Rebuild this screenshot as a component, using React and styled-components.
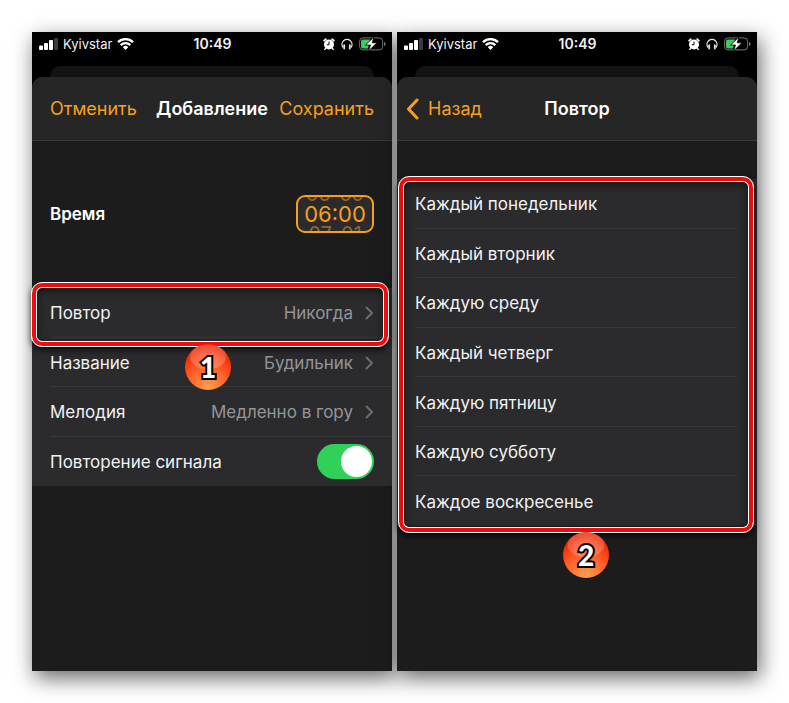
import React, { useState } from "react";
import styled, { createGlobalStyle, css, ThemeProvider } from "styled-components";

const theme = {
  color: {
    orange: "#f7a01d",
    sheet: "#1c1c1d",
    header: "#262627",
    row: "#2b2b2d",
    line: "#39393b",
    gray: "#949499",
    green: "#30d158",
  },
};

const DAYS = [
  "Каждый понедельник",
  "Каждый вторник",
  "Каждую среду",
  "Каждый четверг",
  "Каждую пятницу",
  "Каждую субботу",
  "Каждое воскресенье",
];

const OPTIONS = [
  { label: "Повтор", value: "Никогда" },
  { label: "Название", value: "Будильник" },
  { label: "Мелодия", value: "Медленно в гору" },
];

const SignalIcon = () => (
  <svg width="19" height="12" viewBox="0 0 19 12" fill="#fff">
    <rect x="0" y="7.500" width="4" height="4.500" rx="1" />
    <rect x="5" y="5" width="4" height="7" rx="1" />
    <rect x="10" y="2" width="4" height="10" rx="1" />
    <rect x="15" y="0" width="4" height="12" rx="1" fill="#3b3b3b" />
  </svg>
);

const WifiIcon = () => (
  <svg width="17" height="12" viewBox="0 0 17 12" fill="none" stroke="#fff">
    <path d="M1 4.2a10.6 10.6 0 0 1 15 0" strokeWidth="2.4" />
    <path d="M3.7 7.100a6.8 6.8 0 0 1 9.6 0" strokeWidth="2.2" />
    <path d="M8.5 12 5.8 9.2a3.8 3.8 0 0 1 5.4 0z" fill="#fff" stroke="none" />
  </svg>
);

const AlarmIcon = () => (
  <svg width="12" height="12" viewBox="0 0 12 12">
    <circle cx="6" cy="6.500" r="5" fill="#fff" />
    <path
      d="M1.200 2.700 2.800 1.200M10.800 2.700 9.200 1.200"
      stroke="#fff"
      strokeWidth="1.8"
      strokeLinecap="round"
    />
    <path d="M2.600 10.500l-.8.900M9.400 10.500l.8.900" stroke="#fff" strokeWidth="1.4" strokeLinecap="round" />
    <path d="M6 3.600v3.200H3.900" fill="none" stroke="#000" strokeWidth="1" />
  </svg>
);

const HeadphonesIcon = () => (
  <svg width="12" height="12" viewBox="0 0 12 12" fill="none" stroke="#e6e6e6">
    <path d="M2 9.500A5 5 0 1 1 10 9.500" strokeWidth="1.3" />
    <path d="M3.200 7.200v3.300M8.800 7.200v3.300" strokeWidth="1.8" strokeLinecap="round" />
  </svg>
);

const BatteryIcon = () => (
  <svg width="27" height="14" viewBox="0 0 27 14">
    <rect x=".6" y=".9" width="23" height="12" rx="3.4" fill="none" stroke="#777" strokeWidth="1" />
    <path d="M25 5v4c1.2-.4 1.6-1.2 1.6-2S26.200 5.400 25 5z" fill="#777" />
    <path d="M4 2.400h7L9 11.400H4a2 2 0 0 1-2-2v-5a2 2 0 0 1 2-2z" fill="#3ccb62" />
    <path d="M15 0 6.500 8h5L9.500 14 18 5.800h-4.800z" fill="#fff" stroke="#000" strokeWidth=".8" />
  </svg>
);

const Chevron = () => (
  <svg width="10" height="14" viewBox="0 0 10 14" fill="none" stroke="#6d6d71" strokeWidth="2">
    <path d="m2.500 1.500 5.500 5.500-5.500 5.500" strokeLinecap="round" strokeLinejoin="round" />
  </svg>
);

const BackChevron = () => (
  <svg width="13" height="22" viewBox="0 0 13 22" fill="none" stroke="currentColor" strokeWidth="3">
    <path d="M11 2 2.500 11 11 20" strokeLinecap="round" strokeLinejoin="round" />
  </svg>
);

const StatusBar = () => (
  <StatusBarWrapper>
    <StatusGroup>
      <SignalIcon />
      <span>Kyivstar</span>
      <WifiIcon />
    </StatusGroup>
    <Clock>10:49</Clock>
    <StatusGroup $end>
      <AlarmIcon />
      <HeadphonesIcon />
      <BatteryIcon />
    </StatusGroup>
  </StatusBarWrapper>
);

const Phone = ({ header, children }) => (
  <PhoneWrapper>
    <StatusBar />
    <BackSheet />
    <Sheet>
      {header}
      {children}
    </Sheet>
  </PhoneWrapper>
);

const App = () => {
  const [snooze, setSnooze] = useState(true);

  return (
    <ThemeProvider theme={theme}>
      <GlobalStyle />
      <Page>
        <Phone
          header={
            <Header>
              <HeaderButton type="button">Отменить</HeaderButton>
              <Title>Добавление</Title>
              <HeaderButton type="button" $end>
                Сохранить
              </HeaderButton>
            </Header>
          }
        >
          <TimeSection>
            <TimeLabel id="time-label">Время</TimeLabel>
            <TimePicker type="button" aria-labelledby="time-label">
              <TimeLine $faded>
                <span>05</span>
                <span>59</span>
              </TimeLine>
              <TimeLine>06:00</TimeLine>
              <TimeLine $faded>
                <span>07</span>
                <span>01</span>
              </TimeLine>
            </TimePicker>
          </TimeSection>
          <OptionList>
            {OPTIONS.map(({ label, value }) => (
              <OptionRow key={label} as="button" type="button">
                <span>{label}</span>
                <RowValue>
                  {value}
                  <Chevron />
                </RowValue>
              </OptionRow>
            ))}
            <OptionRow $last>
              <label htmlFor="snooze">Повторение сигнала</label>
              <Toggle
                id="snooze"
                type="checkbox"
                checked={snooze}
                onChange={() => setSnooze(!snooze)}
              />
            </OptionRow>
            <RowFrame />
            <StepOne>1</StepOne>
          </OptionList>
        </Phone>

        <Phone
          header={
            <Header>
              <HeaderButton type="button" $back>
                <BackChevron />
                Назад
              </HeaderButton>
              <Title>Повтор</Title>
            </Header>
          }
        >
          <DayList>
            {DAYS.map((day) => (
              <DayRow key={day} type="button">
                {day}
              </DayRow>
            ))}
            <ListFrame />
            <StepTwo>2</StepTwo>
          </DayList>
        </Phone>
      </Page>
    </ThemeProvider>
  );
};

const GlobalStyle = createGlobalStyle`
  * {
    box-sizing: border-box;
  }
  body {
    margin: 0;
    background: #fff;
    font-family: Inter, "Liberation Sans", sans-serif;
  }
  button {
    padding: 0;
    border: 0;
    background: none;
    color: inherit;
    font: inherit;
    text-align: left;
  }
  svg {
    flex: none;
  }
`;

const Page = styled.main`
  display: grid;
  grid-template-columns: 1fr 1fr;
  gap: 5px;
  min-height: 100vh;
  padding: 32px;
`;

const PhoneWrapper = styled.section`
  display: flex;
  flex-direction: column;
  min-width: 0;
  background: #000;
  color: #f2f2f4;
  font-size: 18px;
  box-shadow: 3px 7px 20px rgba(0, 0, 0, 0.6);
`;

const StatusBarWrapper = styled.div`
  display: grid;
  grid-template-columns: 1fr auto 1fr;
  align-items: center;
  height: 23px;
  padding: 0 6px 0 7px;
  font-size: 13px;
`;

const StatusGroup = styled.div`
  display: flex;
  align-items: center;
  gap: 5px;
  ${({ $end }) =>
    $end &&
    css`
      justify-content: flex-end;
      gap: 6px;
    `};
`;

const Clock = styled.span`
  font-size: 14px;
  font-weight: 600;
`;

const BackSheet = styled.div`
  height: 11px;
  margin: 11px 18px 0;
  border-radius: 10px 10px 0 0;
  background: #131313;
`;

const Sheet = styled.div`
  flex: 1;
  border-radius: 11px 11px 0 0;
  background: ${({ theme }) => theme.color.sheet};
`;

const Header = styled.header`
  display: grid;
  grid-template-columns: 1fr auto 1fr;
  align-items: center;
  height: 64px;
  padding: 0 18px;
  border-bottom: 1px solid ${({ theme }) => theme.color.line};
  border-radius: 11px 11px 0 0;
  background: ${({ theme }) => theme.color.header};
`;

const HeaderButton = styled.button`
  && {
    color: ${({ theme }) => theme.color.orange};
    ${({ $end }) =>
      $end &&
      css`
        text-align: right;
      `};
    ${({ $back }) =>
      $back &&
      css`
        display: flex;
        align-items: center;
        gap: 9px;
        margin-left: -9px;
      `};
  }
`;

const Title = styled.h1`
  margin: 0;
  color: #fff;
  font-size: 18px;
  font-weight: 600;
`;

const TimeSection = styled.div`
  display: flex;
  align-items: center;
  justify-content: space-between;
  height: 147px;
  padding: 0 18px 2px;
`;

const TimeLabel = styled.span`
  color: #fff;
  font-size: 17px;
  font-weight: 600;
`;

const TimePicker = styled.button`
  && {
    display: flex;
    flex-direction: column;
    align-items: center;
    justify-content: center;
    width: 78px;
    height: 38px;
    overflow: hidden;
    border: 2px solid ${({ theme }) => theme.color.orange};
    border-radius: 9px;
    background: ${({ theme }) => theme.color.row};
    color: ${({ theme }) => theme.color.orange};
    font-size: 22px;
    line-height: 20px;
  }
`;

const TimeLine = styled.span`
  display: flex;
  ${({ $faded }) =>
    $faded &&
    css`
      gap: 9px;
      font-size: 20px;
      opacity: 0.5;
    `};
`;

const List = styled.div`
  position: relative;
  display: grid;
  grid-auto-rows: 1fr;
  background: ${({ theme }) => theme.color.row};
  font-size: 17px;
`;

const OptionList = styled(List)`
  height: 198px;
`;

const DayList = styled(List)`
  height: 347px;
  margin-top: 38px;
`;

const OptionRow = styled.div`
  && {
    display: flex;
    align-items: center;
    justify-content: space-between;
    margin-left: 18px;
    padding: 2px 18px 0 0;
    border-bottom: 1px solid ${({ theme, $last }) => ($last ? "transparent" : theme.color.line)};
  }
`;

const RowValue = styled.span`
  display: flex;
  align-items: center;
  gap: 11px;
  color: ${({ theme }) => theme.color.gray};
`;

const Toggle = styled.input`
  display: flex;
  align-items: center;
  width: 57px;
  height: 35px;
  margin: 0;
  padding: 2px;
  appearance: none;
  border-radius: 18px;
  background: #39393d;

  &::before {
    content: "";
    width: 31px;
    height: 31px;
    border-radius: 50%;
    background: #fff;
  }
  &:checked {
    justify-content: flex-end;
    background: ${({ theme }) => theme.color.green};
  }
`;

const DayRow = styled.button`
  && {
    margin: 0 20px 0 18px;
    padding-top: 2px;
    border-bottom: 1px solid ${({ theme }) => theme.color.line};
  }
  &&:last-of-type {
    border-bottom-color: transparent;
  }
`;

// red outline with a thin white edge on both sides
const Frame = styled.div`
  position: absolute;
  pointer-events: none;
  border: 1px solid #fff;
  border-radius: 11px;
  box-shadow:
    inset 0 0 0 4px #ee0c0c,
    inset 0 0 0 5px #fff,
    inset 0 3px 10px 4px rgba(0, 0, 0, 0.6),
    0 3px 6px rgba(0, 0, 0, 0.7);
`;

const RowFrame = styled(Frame)`
  top: -6px;
  left: -1px;
  right: 3px;
  height: 65px;
`;

const ListFrame = styled(Frame)`
  inset: -3px 3px -7px 1px;
`;

const Step = styled.div`
  position: absolute;
  display: flex;
  align-items: center;
  justify-content: center;
  width: 46px;
  height: 46px;
  border-radius: 50%;
  background:
    radial-gradient(ellipse 19px 13px at 50% 28%, rgba(255, 255, 255, 0.32), rgba(255, 255, 255, 0.2) 92%, transparent 100%),
    radial-gradient(circle at 50% 95%, #ffa050 0, #ff5a26 45%, #f02800 75%, #d81e00 100%);
  color: #fff;
  font-family: Lato, "Liberation Sans", sans-serif;
  font-size: 28px;
  font-weight: 900;
  line-height: 46px;
  -webkit-text-stroke: 4px #000;
  paint-order: stroke fill;
`;

const StepOne = styled(Step)`
  top: 56px;
  left: calc(50% - 27px);
`;

const StepTwo = styled(Step)`
  bottom: -52px;
  left: calc(50% - 14px);
`;

export default App;
